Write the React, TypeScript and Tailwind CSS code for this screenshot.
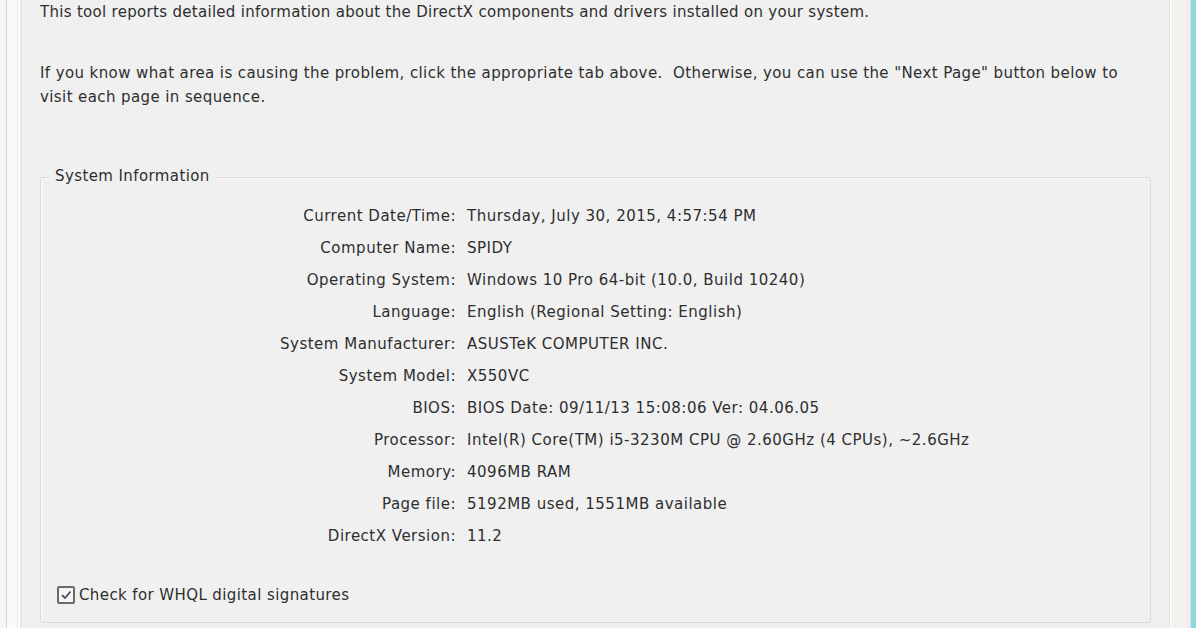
import React from "react";

const rows: [string, string][] = [
  ["Current Date/Time:", "Thursday, July 30, 2015, 4:57:54 PM"],
  ["Computer Name:", "SPIDY"],
  ["Operating System:", "Windows 10 Pro 64-bit (10.0, Build 10240)"],
  ["Language:", "English (Regional Setting: English)"],
  ["System Manufacturer:", "ASUSTeK COMPUTER INC."],
  ["System Model:", "X550VC"],
  ["BIOS:", "BIOS Date: 09/11/13 15:08:06 Ver: 04.06.05"],
  ["Processor:", "Intel(R) Core(TM) i5-3230M CPU @ 2.60GHz (4 CPUs), ~2.6GHz"],
  ["Memory:", "4096MB RAM"],
  ["Page file:", "5192MB used, 1551MB available"],
  ["DirectX Version:", "11.2"],
];

export default function App() {
  return (
    <div
      className="flex h-[628px] w-[1196px] overflow-hidden bg-[#f0f0f0] text-[15px] tracking-[0.4px] text-[#2e2e2e] antialiased"
      style={{ fontFamily: "'DejaVu Sans', Tahoma, sans-serif" }}
    >
      {/* window frame, left */}
      <div className="w-[6px] bg-[#f6f6f6]" />
      <div className="w-px bg-[#d4d4d4]" />
      <div className="w-[10px] bg-[#fafafa]" />
      <div className="w-px bg-[#e2e2e2]" />
      <div className="w-[2px] bg-white" />
      <div className="w-[2px] bg-[#e6e6e6]" />

      {/* tab page */}
      <div className="flex-1 px-[18px]">
        <p className="leading-[24px] tracking-[0.3px]">
          This tool reports detailed information about the DirectX components and drivers installed on your system.
        </p>
        <p className="mt-[37px] leading-[24px]">
          If you know what area is causing the problem, click the appropriate tab above.&nbsp; Otherwise, you can use the "Next Page" button below to
          <br />
          visit each page in sequence.
        </p>

        {/* System Information group box */}
        <div className="relative mt-[68px] h-[446px] rounded-[2px] border border-[#dadada] shadow-[inset_1px_1px_0_#fafafa]">
          <span className="absolute -top-[13px] left-[8px] bg-[#f0f0f0] px-[6px] leading-[22px]">
            System Information
          </span>

          <div className="pt-[22px] tracking-[0.5px]">
            {rows.map(([label, value]) => (
              <div key={label} className="flex h-[32px] items-center">
                <span className="w-[415px] text-right">{label}</span>
                <span className="ml-[11px]">{value}</span>
              </div>
            ))}
          </div>

          <label className="mt-[32px] ml-[16px] flex items-center gap-[4px]">
            <span className="flex h-[18px] w-[18px] items-center justify-center rounded-[2px] border-2 border-[#6a6a6a] bg-[#f4f4f4]">
              <svg viewBox="0 0 12 12" className="h-[12px] w-[12px]" fill="none" stroke="#444" strokeWidth="1.6">
                <path d="M2 6.2 L5 9 L10.5 2.5" />
              </svg>
            </span>
            Check for WHQL digital signatures
          </label>
        </div>
      </div>

      {/* window frame, right */}
      <div className="w-px bg-[#e2e2e2]" />
      <div className="w-px bg-white" />
      <div className="w-[15px] bg-[#f3f2ee]" />
      <div className="w-[4px] bg-[#f6e9ef]" />
      <div className="w-px bg-[#cfe7ea]" />
      <div className="w-[5px] bg-[#8fd6d6]" />
    </div>
  );
}
